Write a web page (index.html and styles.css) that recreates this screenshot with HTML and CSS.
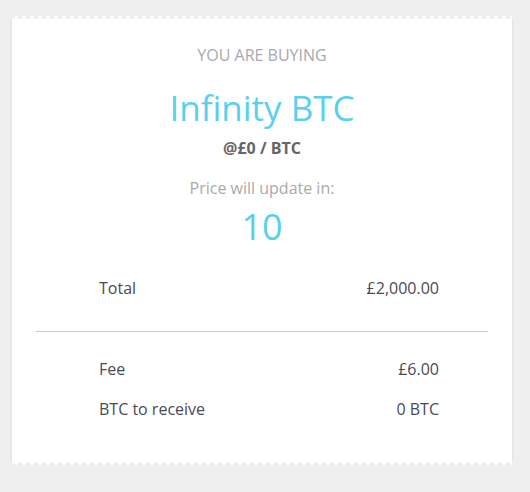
FILE: index.html
```html
<!DOCTYPE html>
<html lang="en">
<head>
<meta charset="utf-8">
<title>Confirm purchase</title>
<link rel="stylesheet" href="styles.css">
</head>
<body>
<div class="receipt">
  <div class="edge edge-top"></div>
  <div class="receipt-body">
    <div class="heading">YOU ARE BUYING</div>
    <div class="amount">Infinity BTC</div>
    <div class="rate">@£0 / BTC</div>
    <div class="countdown-label">Price will update in:</div>
    <div class="countdown">10</div>
    <div class="rows">
      <div class="row"><span>Total</span><span>£2,000.00</span></div>
    </div>
    <hr class="divider">
    <div class="rows rows-bottom">
      <div class="row"><span>Fee</span><span>£6.00</span></div>
      <div class="row"><span>BTC to receive</span><span>0 BTC</span></div>
    </div>
  </div>
  <div class="edge edge-bottom"></div>
</div>
</body>
</html>
```
FILE: styles.css
```css
html, body {
  margin: 0;
  padding: 0;
  background: #efefef;
  font-family: "Open Sans", "Noto Sans", sans-serif;
}

.receipt {
  width: 500px;
  margin: 15px 0 0 12px;
}

.edge {
  height: 4px;
  background-size: 8px 4px;
  background-repeat: repeat-x;
}

.edge-top {
  background-image: conic-gradient(from 135deg at 50% 0, #fff 90deg, transparent 0);
}

.edge-bottom {
  background-image: conic-gradient(from -45deg at 50% 100%, #fff 90deg, transparent 0);
}

.receipt-body {
  background: #fff;
  box-shadow: -1px 0 2px rgba(0, 0, 0, 0.06), 1px 0 2px rgba(0, 0, 0, 0.06);
  padding: 25px 0 41px;
  text-align: center;
}

.heading {
  font-size: 16px;
  line-height: 22px;
  color: #a8a8b0;
}

.amount {
  margin-top: 18px;
  font-size: 35px;
  line-height: 48px;
  color: #5ccfec;
}

.rate {
  margin-top: 5px;
  font-size: 16px;
  font-weight: 700;
  line-height: 22px;
  color: #666;
}

.countdown-label {
  margin-top: 18px;
  font-size: 16px;
  line-height: 22px;
  color: #aaa;
}

.countdown {
  margin-top: 6px;
  font-size: 36px;
  line-height: 44px;
  color: #5ccfec;
}

.rows {
  padding: 28px 73px 0 87px;
}

.row {
  display: flex;
  justify-content: space-between;
  font-size: 16px;
  line-height: 22px;
  color: #4a4a55;
}

.divider {
  margin: 32px 24px 0;
  border: 0;
  border-top: 1px solid #ccc;
}

.rows-bottom {
  padding-top: 26px;
  display: flex;
  flex-direction: column;
  gap: 18px;
}
```
